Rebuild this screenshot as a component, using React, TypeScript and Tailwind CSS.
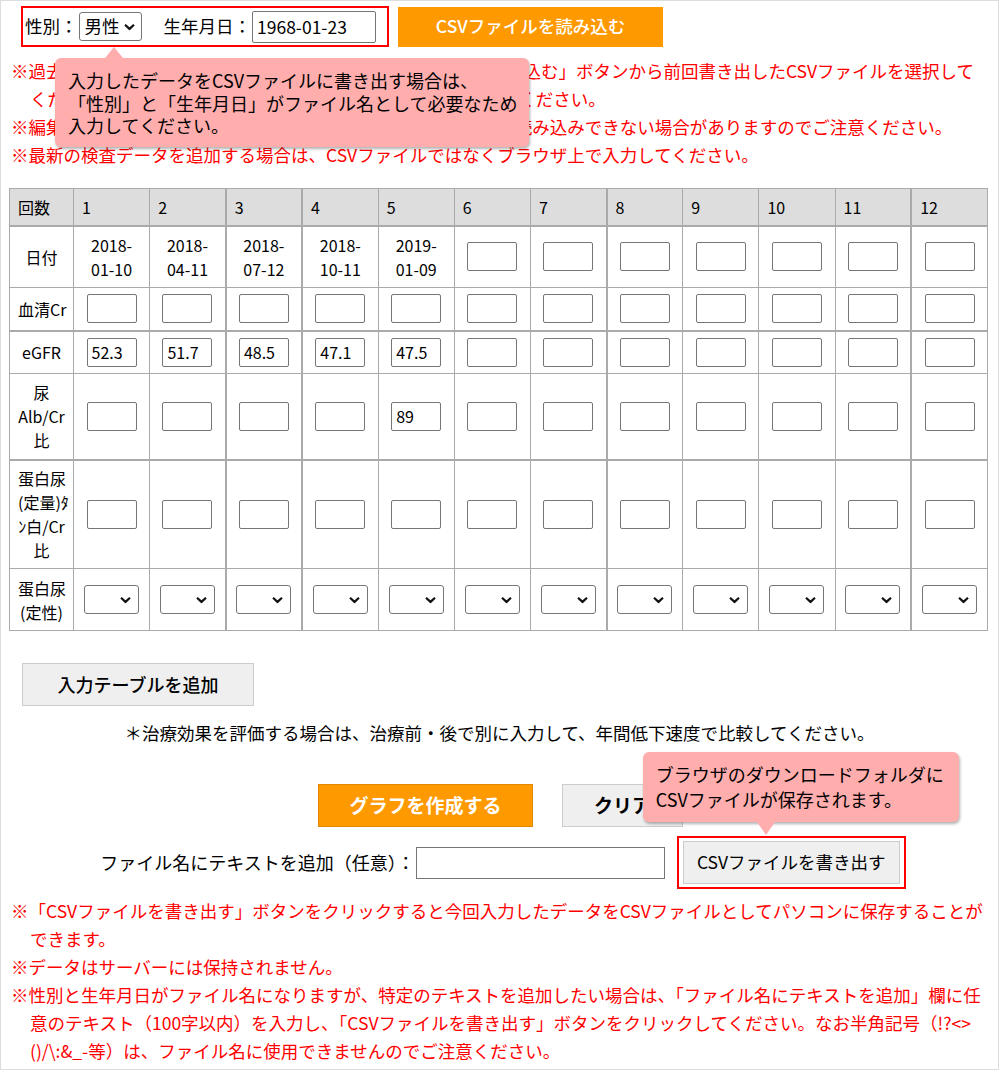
import React from 'react';

const COLS = [1, 2, 3, 4, 5, 6, 7, 8, 9, 10, 11, 12];
const THICK = [3, 4, 8, 12];
const DATES = ['2018-01-10', '2018-04-11', '2018-07-12', '2018-10-11', '2019-01-09'];
const EGFR = ['52.3', '51.7', '48.5', '47.1', '47.5'];

const Tip: React.FC<{ className: string; children: React.ReactNode; arrow: 'up' | 'down'; arrowClass: string }> = ({
  className,
  children,
  arrow,
  arrowClass,
}) => (
  <div className={`absolute z-10 rounded-[6px] bg-[#ffadad] text-[18px] text-black shadow-[1px_2px_3px_rgba(0,0,0,0.3)] ${className}`}>
    {children}
    {arrow === 'up' ? (
      <span className={`absolute -top-[11px] h-0 w-0 border-x-[9px] border-b-[11px] border-x-transparent border-b-[#ffadad] ${arrowClass}`} />
    ) : (
      <span className={`absolute -bottom-[13px] h-0 w-0 border-x-[9px] border-t-[13px] border-x-transparent border-t-[#ffadad] ${arrowClass}`} />
    )}
  </div>
);

const Chevron: React.FC<{ className: string }> = ({ className }) => (
  <svg viewBox="0 0 11 7" className={`pointer-events-none absolute top-1/2 h-[7px] w-[11px] -translate-y-1/2 ${className}`}>
    <path d="M1 1.2 L5.5 5.4 L10 1.2" fill="none" stroke="#111" strokeWidth="2.2" />
  </svg>
);

const TextInput: React.FC<{ value?: string }> = ({ value }) => (
  <input
    defaultValue={value}
    className="mx-auto block h-[29px] w-[50px] rounded-[2px] border border-[#767676] bg-white px-[4px] text-[16px] leading-none text-black"
  />
);

const SmallSelect: React.FC = () => (
  <div className="relative mx-auto w-[55px]">
    <select className="block h-[29px] w-[55px] appearance-none rounded-[3px] border border-[#767676] bg-white text-[16px]">
      <option value=""></option>
      <option value="-">-</option>
      <option value="±">±</option>
      <option value="+">+</option>
    </select>
    <Chevron className="right-[8px]" />
  </div>
);

const cellCls = (col: number, thickTop?: boolean) =>
  `border border-[#aaa] px-[8px] py-[4px] ${THICK.includes(col) ? 'border-l-2' : ''} ${thickTop ? 'border-t-2' : ''}`;

const DataRow: React.FC<{
  label: React.ReactNode;
  thickTop?: boolean;
  rowClass: string;
  render: (col: number) => React.ReactNode;
}> = ({ label, thickTop, rowClass, render }) => (
  <tr className={rowClass}>
    <td className={`${cellCls(0, thickTop)} whitespace-nowrap text-center`}>{label}</td>
    {COLS.map((c) => (
      <td key={c} className={`${cellCls(c, thickTop)} text-center`}>
        {render(c)}
      </td>
    ))}
  </tr>
);

const InputTable: React.FC = () => (
  <table className="ml-[8px] w-[979px] table-fixed border-collapse text-[16px] leading-[24px] text-black">
    <colgroup>
      <col className="w-[64px]" />
      {COLS.map((c) => (
        <col key={c} />
      ))}
    </colgroup>
    <tbody>
      <tr className="h-[37px] bg-[#dddddd]">
        <td className={`${cellCls(0)} text-left`}>回数</td>
        {COLS.map((c) => (
          <td key={c} className={`${cellCls(c)} text-left`}>
            {c}
          </td>
        ))}
      </tr>
      <DataRow
        label="日付"
        thickTop
        rowClass="h-[62px]"
        render={(c) =>
          c <= DATES.length ? (
            <span>
              {DATES[c - 1].slice(0, 5)}
              <br />
              {DATES[c - 1].slice(5)}
            </span>
          ) : (
            <TextInput />
          )
        }
      />
      <DataRow label="血清Cr" rowClass="h-[43px]" render={() => <TextInput />} />
      <DataRow label="eGFR" thickTop rowClass="h-[43px]" render={(c) => <TextInput value={EGFR[c - 1]} />} />
      <DataRow
        label={
          <>
            尿<br />
            Alb/Cr
            <br />比
          </>
        }
        rowClass="h-[86px]"
        render={(c) => <TextInput value={c === 5 ? '89' : undefined} />}
      />
      <DataRow
        label={
          <>
            蛋白尿
            <br />
            (定量)ﾀ
            <br />
            ﾝ白/Cr
            <br />比
          </>
        }
        thickTop
        rowClass="h-[109px]"
        render={() => <TextInput />}
      />
      <DataRow
        label={
          <>
            蛋白尿
            <br />
            (定性)
          </>
        }
        rowClass="h-[62px]"
        render={() => <SmallSelect />}
      />
    </tbody>
  </table>
);

export default function App() {
  return (
    <div className="h-[1070px] w-[999px] overflow-hidden border border-[#dddddd] bg-white font-['Noto_Sans_CJK_JP',sans-serif] text-[17.5px] text-black">
      {/* header controls */}
      <div className="flex items-center pl-[20px] pt-[5px]">
        <div className="relative flex h-[41px] w-[368px] items-center border-2 border-[#ff0000] pl-[2px]">
          <span>性別：</span>
          <div className="relative ml-[1px] w-[63px]">
            <select className="block h-[29px] w-[63px] appearance-none rounded-[3px] border border-[#767676] bg-white pl-[5px] text-[17.5px]">
              <option>男性</option>
              <option>女性</option>
            </select>
            <Chevron className="right-[7px]" />
          </div>
          <span className="ml-[22px]">生年月日：</span>
          <input
            defaultValue="1968-01-23"
            className="ml-[1px] h-[32px] w-[124px] rounded-[2px] border border-[#767676] bg-white px-[4px] text-[17.5px]"
          />
          <Tip className="left-[32px] top-[50px] w-[474px] pb-[10px] pl-[13px] pt-[11px] leading-[22.5px]" arrow="up" arrowClass="left-[50px]">
            入力したデータをCSVファイルに書き出す場合は、
            <br />
            「性別」と「生年月日」がファイル名として必要なため
            <br />
            入力してください。
          </Tip>
        </div>
        <button className="ml-[9px] h-[40px] w-[265px] bg-[#ff9900] text-[17.5px] font-medium text-white">CSVファイルを読み込む</button>
      </div>

      {/* top notes */}
      <div className="mt-[10px] pr-[10px] leading-[28px] text-[#ff0000]">
        <p className="pl-[29px] -indent-[19px]">
          ※過去に入力したデータを使用する場合は、「CSVファイルを読み込む」ボタンから前回書き出したCSVファイルを選択して
          <br />
          ください。前回のデータが表示されますので、続けて入力してください。
        </p>
        <p className="pl-[29px] -indent-[19px]">
          ※編集したCSVファイルや本サイト以外で作成したファイルは、読み込みできない場合がありますのでご注意ください。
        </p>
        <p className="pl-[29px] -indent-[19px]">※最新の検査データを追加する場合は、CSVファイルではなくブラウザ上で入力してください。</p>
      </div>

      <div className="mt-[19px]">
        <InputTable />
      </div>

      <button className="ml-[21px] mt-[32px] h-[43px] w-[232px] border border-[#cccccc] bg-[#efefef] text-[18px] font-medium text-black">
        入力テーブルを追加
      </button>

      <p className="mt-[13px] text-center leading-[28px]">＊治療効果を評価する場合は、治療前・後で別に入力して、年間低下速度で比較してください。</p>

      <div className="mt-[37px] flex justify-center gap-[29px] pl-[2px]">
        <button className="h-[43px] w-[215px] border border-[#e08800] bg-[#ff9900] text-[19px] font-bold text-white">グラフを作成する</button>
        <button className="h-[43px] w-[121px] border border-[#cccccc] bg-[#efefef] text-[19px] font-bold text-black">クリア</button>
      </div>

      <div className="mt-[9px] flex items-center justify-center pl-[7px]">
        <span className="text-[18px]">ファイル名にテキストを追加（任意）：</span>
        <input className="ml-[1px] h-[32px] w-[249px] border border-[#767676] bg-white px-[4px] text-[17.5px]" />
        <div className="relative ml-[12px] flex h-[53px] w-[229px] items-center justify-center border-2 border-[#ff0000]">
          <button className="h-[43px] w-[217px] border border-[#cccccc] bg-[#efefef] text-[17.5px] text-black">CSVファイルを書き出す</button>
          <Tip className="-left-[36px] bottom-[65px] w-[316px] py-[10px] pl-[13px] leading-[25px]" arrow="down" arrowClass="left-[114px]">
            ブラウザのダウンロードフォルダに
            <br />
            CSVファイルが保存されます。
          </Tip>
        </div>
      </div>

      {/* bottom notes */}
      <div className="mt-[8px] pr-[10px] leading-[28px] text-[#ff0000]">
        <p className="pl-[29px] -indent-[19px]">
          ※「CSVファイルを書き出す」ボタンをクリックすると今回入力したデータをCSVファイルとしてパソコンに保存することができます。
        </p>
        <p className="pl-[29px] -indent-[19px]">※データはサーバーには保持されません。</p>
        <p className="pl-[29px] -indent-[19px]">
          ※性別と生年月日がファイル名になりますが、特定のテキストを追加したい場合は、「ファイル名にテキストを追加」欄に任
          <br />
          意のテキスト（100字以内）を入力し、「CSVファイルを書き出す」ボタンをクリックしてください。なお半角記号（!?&lt;&gt;
          <br />
          ()/\:&amp;_-等）は、ファイル名に使用できませんのでご注意ください。
        </p>
      </div>
    </div>
  );
}
